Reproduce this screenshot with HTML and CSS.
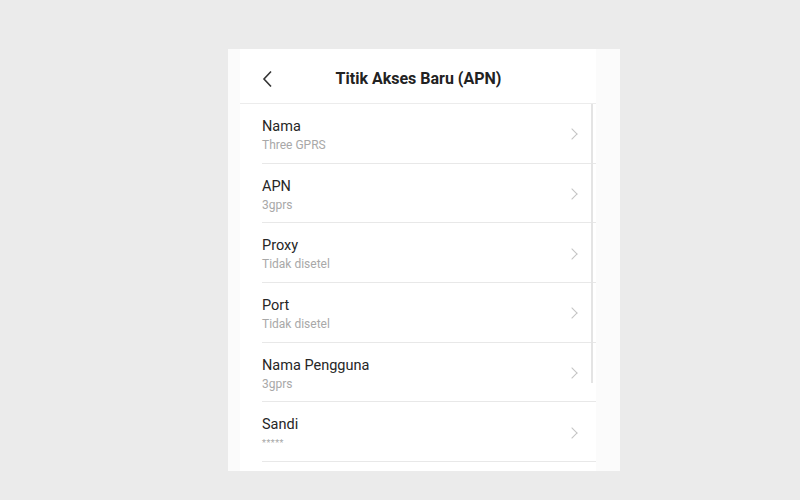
FILE: index.html
```html
<!doctype html>
<html lang="id">
<head>
    <meta charset="UTF-8" />
    <title>Titik Akses Baru (APN)</title>
    <link rel="stylesheet" href="styles.css">
</head>
<body>
    <div class="card">
        <div class="panel">
            <div class="header">
                <svg class="back" width="12" height="18" viewBox="0 0 12 18">
                    <polyline points="9,1.5 2,9 9,16.5" fill="none" stroke="#333" stroke-width="1.6" stroke-linejoin="miter"/>
                </svg>
                <h3 class="title">Titik Akses Baru (APN)</h3>
            </div>
            <div class="list">
                <div class="row">
                    <div class="texts"><p class="label">Nama</p><p class="value">Three GPRS</p></div>
                    <span class="chev"></span>
                </div>
                <div class="row">
                    <div class="texts"><p class="label">APN</p><p class="value">3gprs</p></div>
                    <span class="chev"></span>
                </div>
                <div class="row">
                    <div class="texts"><p class="label">Proxy</p><p class="value">Tidak disetel</p></div>
                    <span class="chev"></span>
                </div>
                <div class="row">
                    <div class="texts"><p class="label">Port</p><p class="value">Tidak disetel</p></div>
                    <span class="chev"></span>
                </div>
                <div class="row">
                    <div class="texts"><p class="label">Nama Pengguna</p><p class="value">3gprs</p></div>
                    <span class="chev"></span>
                </div>
                <div class="row">
                    <div class="texts"><p class="label">Sandi</p><p class="value stars">*****</p></div>
                    <span class="chev"></span>
                </div>
                <div class="scrollbar"></div>
            </div>
        </div>
    </div>
</body>
</html>
```

FILE: styles.css
```css
html, body {
    margin: 0;
    height: 100%;
    background: #ebebeb;
}
body {
    padding-top: 49px;
    box-sizing: border-box;
    font-family: Roboto, "Noto Sans", sans-serif;
}
.card {
    margin-left: 228px;
    width: 392px;
    height: 422px;
    background: #fbfbfb;
    padding: 0 24px 0 12px;
    box-sizing: border-box;
}
.panel {
    background: #fff;
    height: 100%;
}
.header {
    height: 55px;
    display: flex;
    align-items: center;
    padding-top: 5px;
    border-bottom: 1px solid #ececec;
    box-sizing: border-box;
    position: relative;
}
.back {
    position: absolute;
    left: 22px;
    top: 21px;
}
.title {
    margin: 0 auto;
    padding-left: 1px;
    font-size: 16px;
    font-weight: 700;
    color: #222;
}
.list {
    position: relative;
    padding-left: 22px;
}
.row {
    height: 59.7px;
    box-sizing: border-box;
    border-bottom: 1px solid #e8e8e8;
    display: flex;
    align-items: center;
    padding-top: 5px;
    padding-right: 20px;
}
.texts {
    flex: 1;
}
.label {
    margin: 0;
    font-size: 14.5px;
    color: #262626;
    line-height: 18px;
}
.value {
    margin: 0;
    font-size: 12px;
    color: #a8a8a8;
    line-height: 18px;
}
.stars {
    font-size: 9px;
    letter-spacing: 0.5px;
}
.chev {
    width: 7px;
    height: 7px;
    border-top: 1.2px solid #c4c4c4;
    border-right: 1.2px solid #c4c4c4;
    transform: rotate(45deg);
    margin-top: -3px;
}
.scrollbar {
    position: absolute;
    right: 3px;
    top: 0;
    width: 2px;
    height: 279px;
    background: #e4e4e4;
}
```
